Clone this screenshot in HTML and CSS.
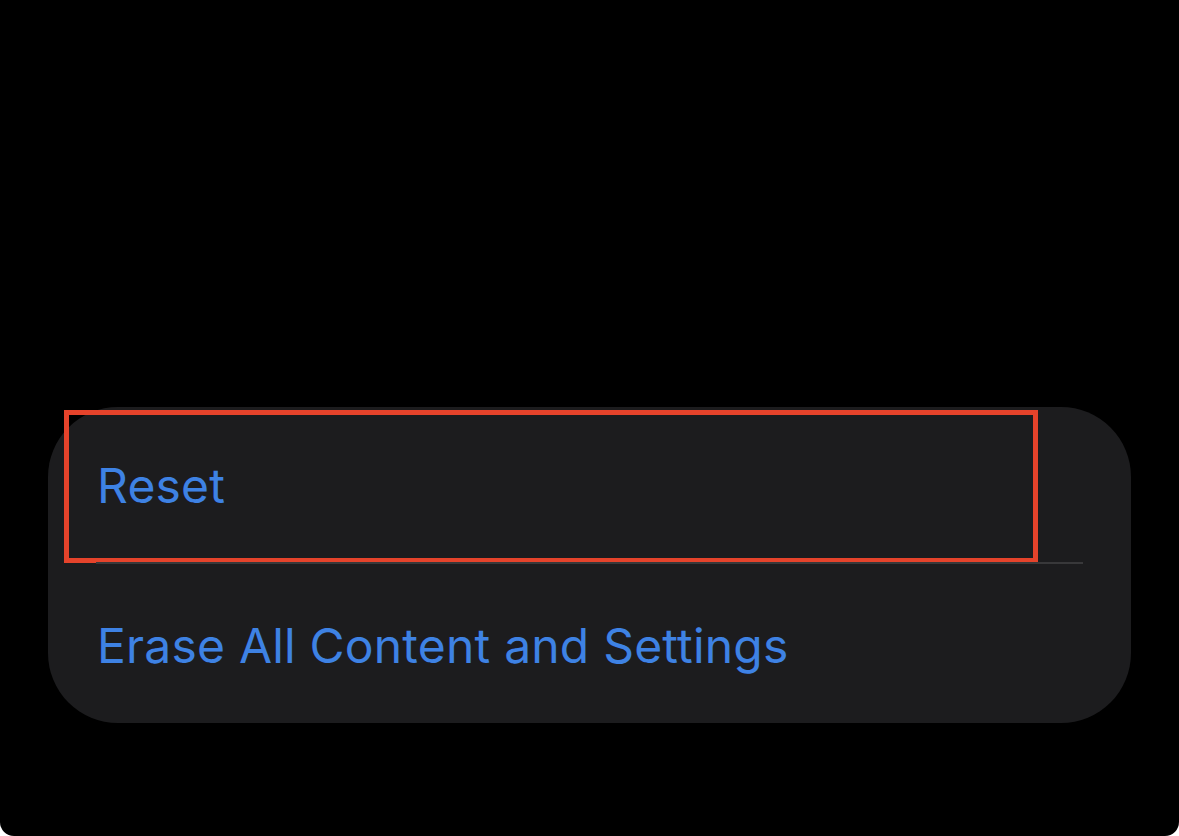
FILE: index.html
```html
<!DOCTYPE html>
<html lang="en">
<head>
    <meta charset="UTF-8">
    <meta name="viewport" content="width=device-width, initial-scale=1.0">
    <title>Reset</title>
    <link rel="stylesheet" href="styles.css">
</head>
<body>
    <div class="screen">
        <div class="group">
            <div class="row first">
                <span class="label">Reset</span>
                <div class="highlight"></div>
            </div>
            <div class="row">
                <span class="label">Erase All Content and Settings</span>
            </div>
        </div>
    </div>
</body>
</html>
```

FILE: styles.css
```css
* {
    margin: 0;
    padding: 0;
    box-sizing: border-box;
}

body {
    background: #fff;
    font-family: Inter, "Noto Sans", sans-serif;
}

.screen {
    width: 1179px;
    height: 836px;
    background: #000;
    border-radius: 0 0 14px 14px;
    padding: 407px 48px 0;
}

.group {
    background: #1c1c1e;
    border-radius: 70px;
}

.row {
    position: relative;
    display: flex;
    align-items: center;
    height: 157px;
    padding-left: 49px;
}

.row.first::after {
    content: "";
    position: absolute;
    left: 48px;
    right: 48px;
    bottom: 0;
    height: 2px;
    background: #38383a;
}

.row + .row {
    height: 159px;
    padding-top: 3px;
}

.label {
    font-size: 48px;
    color: #3e82e4;
    letter-spacing: 0.2px;
}

.highlight {
    position: absolute;
    left: 16px;
    top: 3px;
    width: 974px;
    height: 153px;
    border: 5px solid #e5432b;
}
```
